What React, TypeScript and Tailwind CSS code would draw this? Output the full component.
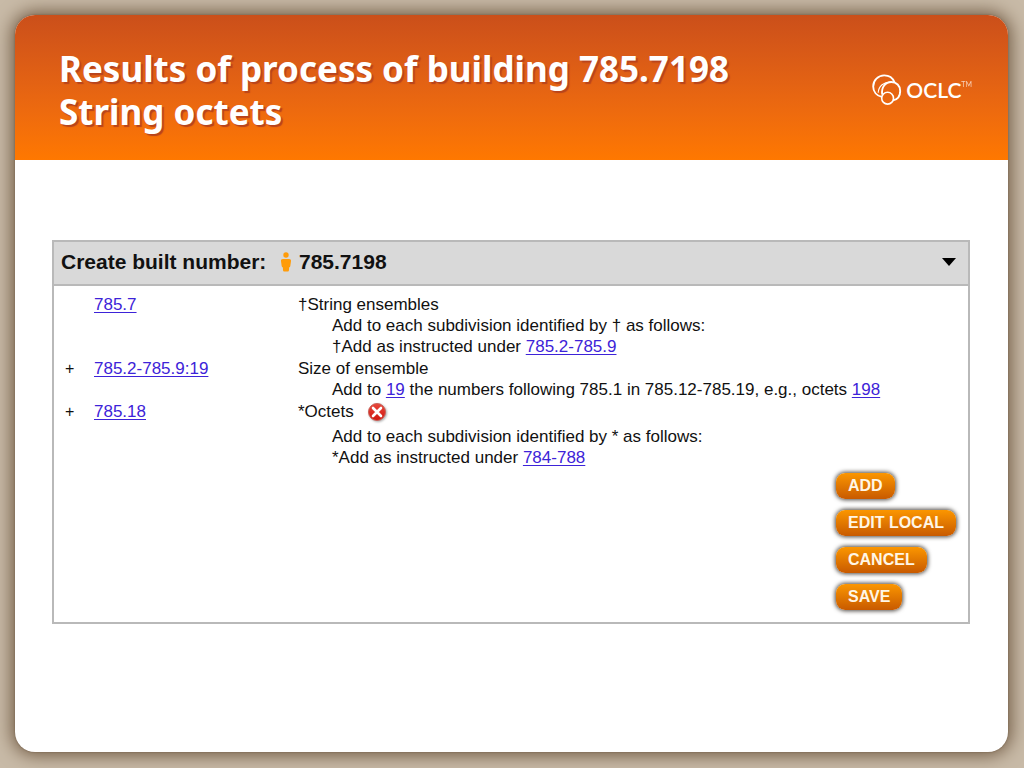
import React from "react";

function Logo() {
  return (
    <div className="flex items-center gap-1 text-white" aria-label="OCLC">
      <svg width="30" height="32" viewBox="0 0 30 32" fill="none" stroke="white" strokeWidth="1.900" aria-hidden="true">
        <path d="M9.800 22.900C4.700 21.700 1.200 17.600 1.200 12.400A11 11 0 0 1 12.200 1.400c4.800 0 8.600 2.600 10.200 6.800" />
        <path d="M10.200 20.600C9 13.200 13.600 8 19.400 8c5 0 8.800 3.800 8.800 8.900 0 4.900-3 8.500-7.200 9.500" />
        <circle cx="15.600" cy="24.200" r="5.900" strokeWidth="1.600" />
        <path d="M6.200 18.800C6.400 12.400 12 7.400 19.400 8" strokeWidth="1.100" />
      </svg>
      <span className="flex items-start font-['Lato','Liberation_Sans',sans-serif]">
        <span className="text-[21px] leading-6 font-semibold">OCLC</span>
        <span className="text-[7px] leading-3 opacity-70">TM</span>
      </span>
    </div>
  );
}

function PersonIcon() {
  return (
    <svg width="12" height="20" viewBox="0 0 12 20" fill="#ff9c0a" aria-hidden="true">
      <circle cx="6" cy="3" r="2.700" />
      <path d="M3 7h6c1.500 0 2.200.9 2 2.200L10.300 14c-.1.900-.6 1.300-1.200 1.500L9 18c-.1 1-.6 1.500-1.500 1.500h-3C3.600 19.500 3.100 19 3 18l-.1-2.500c-.6-.2-1.100-.6-1.200-1.500L1 9.200C.8 7.900 1.500 7 3 7z" />
    </svg>
  );
}

function RemoveIcon() {
  return (
    <svg width="22" height="22" viewBox="0 0 22 22" aria-hidden="true" className="drop-shadow-[1px_1px_1px_#00000055]">
      <defs>
        <linearGradient id="red" x1="0" y1="0" x2="0" y2="1">
          <stop offset="0" stopColor="#e8483c" />
          <stop offset="1" stopColor="#d0160e" />
        </linearGradient>
      </defs>
      <circle cx="11" cy="11" r="8.500" fill="url(#red)" stroke="#c9625a" />
      <path d="M7 7l8 8M15 7l-8 8" stroke="white" strokeWidth="2.600" strokeLinecap="round" />
    </svg>
  );
}

function Ref({ children }: { children: string }) {
  return (
    <a href="#" className="text-[#3d23d8] underline decoration-1 underline-offset-2">
      {children}
    </a>
  );
}

type Row = { plus: boolean; number: string; title: string; removable?: boolean; notes: React.ReactNode[] };

const rows: Row[] = [
  {
    plus: false,
    number: "785.7",
    title: "†String ensembles",
    notes: [
      "Add to each subdivision identified by † as follows:",
      <>†Add as instructed under <Ref>785.2-785.9</Ref></>,
    ],
  },
  {
    plus: true,
    number: "785.2-785.9:19",
    title: "Size of ensemble",
    notes: [
      <>Add to <Ref>19</Ref> the numbers following 785.1 in 785.12-785.19, e.g., octets <Ref>198</Ref></>,
    ],
  },
  {
    plus: true,
    number: "785.18",
    title: "*Octets",
    removable: true,
    notes: [
      "Add to each subdivision identified by * as follows:",
      <>*Add as instructed under <Ref>784-788</Ref></>,
    ],
  },
];

const actions = ["ADD", "EDIT LOCAL", "CANCEL", "SAVE"];

export default function App() {
  return (
    <div className="flex min-h-screen bg-[#c8baa7] p-4 pt-[15px] pl-[15px]">
      <main className="flex flex-1 flex-col overflow-hidden rounded-[20px] bg-white shadow-[0_0_18px_3px_#6f5942,0_0_2px_#75604b]">
        <header className="flex h-[145px] items-center justify-between bg-linear-to-b from-[#cb4f1a] to-[#ff7800] pt-[5px] pr-9 pl-11">
          <h1 className="font-['Noto_Sans',sans-serif] text-[35px] leading-[43px] font-bold text-white [text-shadow:2px_2px_1px_#b8441c]">
            Results of process of building 785.7198
            <br />
            String octets
          </h1>
          <Logo />
        </header>

        <section className="mt-20 mr-[38px] ml-[37px] flex flex-col border-2 border-[#b9b9b9] font-['Liberation_Sans',sans-serif] text-[17px] leading-[21px] text-[#111]">
          <div className="flex h-[44px] items-center border-b-2 border-[#b9b9b9] bg-[#d9d9d9] pr-3 pb-0.5 pl-[7px]">
            <h2 className="flex flex-1 items-center text-[21px] leading-6 font-bold">
              <span className="w-[219px]">Create built number:</span>
              <span className="flex items-center gap-[7px]">
                <PersonIcon />
                785.7198
              </span>
            </h2>
            <button type="button" aria-label="Collapse">
              <svg width="14" height="8" viewBox="0 0 14 8" aria-hidden="true">
                <path d="M0 0h14L7 8z" fill="#000" />
              </svg>
            </button>
          </div>

          <table className="mt-2 w-full border-collapse text-left">
            <tbody>
              {rows.map((row) => (
                <tr key={row.number} className="align-top">
                  <td className="w-[40px] pl-[11px] text-base leading-[21px]">{row.plus ? "+" : ""}</td>
                  <td className="w-[204px]">
                    <Ref>{row.number}</Ref>
                  </td>
                  <td className="pb-px">
                    <div className="flex items-start gap-3">
                      <span>{row.title}</span>
                      {row.removable && (
                        <button type="button" aria-label="Remove" className="h-[25px] pb-1">
                          <RemoveIcon />
                        </button>
                      )}
                    </div>
                    {row.notes.map((note, i) => (
                      <p key={i} className="pl-[34px]">{note}</p>
                    ))}
                  </td>
                </tr>
              ))}
            </tbody>
          </table>

          <div className="mt-1 mb-3 flex flex-col items-start gap-[11px] self-end pr-3">
            {actions.map((label) => (
              <button
                key={label}
                type="button"
                className="h-[26px] rounded-[9px] bg-linear-to-b from-[#fb9600] to-[#c85a00] px-3 text-base leading-[26px] font-bold text-[#fff6e6] shadow-[0_0_4px_1px_#4f4a45]"
              >
                {label}
              </button>
            ))}
          </div>
        </section>
      </main>
    </div>
  );
}
